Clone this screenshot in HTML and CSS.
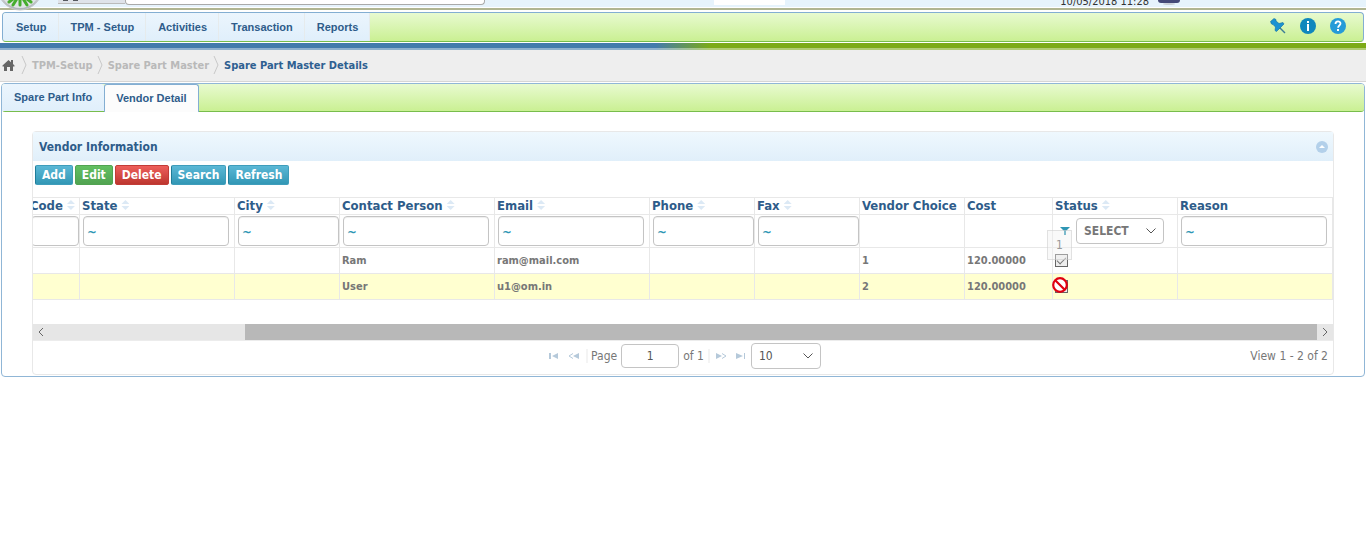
FILE: index.html
```html
<!DOCTYPE html>
<html lang="en">
<head>
    <meta charset="UTF-8">
    <meta name="viewport" content="width=device-width, initial-scale=1.0">
    <title>Spare Part Master Details</title>
    <link rel="stylesheet" href="styles.css">
</head>
<body>
    <header class="top-header">
        <svg class="logo" width="48" height="24" viewBox="0 0 48 24">
            <defs>
                <linearGradient id="logoBg" x1="0" y1="0" x2="0" y2="1">
                    <stop offset="0.5" stop-color="#e4e8ea"/>
                    <stop offset="1" stop-color="#a9b0b4"/>
                </linearGradient>
            </defs>
            <circle cx="20" cy="-12" r="22" fill="url(#logoBg)" stroke="#c4c9cc"/>
            <circle cx="20" cy="-12" r="20" fill="#dfe4e6"/>
            <g stroke="#45ad2e" stroke-width="3" stroke-linecap="round">
                <path d="M20 -3V5M18 -3L13 5M22 -3L27 5M17 -4L9 2M23 -4L31 2"/>
            </g>
        </svg>
        <div class="top-search">
            <span class="search-type">
                <svg width="20" height="3" viewBox="0 0 20 3"><path d="M2 0h5v1H2zM12 0h5v1h-5z" fill="#55585f"/></svg>
            </span>
            <input class="search-text" type="text" aria-label="Search">
        </div>
        <div class="top-box"></div>
        <div class="top-info">
            <span class="date">10/05/2018 11:28</span>
            <svg class="user-icon" width="24" height="6" viewBox="0 0 24 6">
                <ellipse cx="12" cy="4" rx="6" ry="1" fill="#c9ced6"/>
                <path d="M1 0h22c0 2-1 3-3 3H4C2 3 1 2 1 0z" fill="#454a78"/>
            </svg>
        </div>
    </header>

    <div class="menu-bar">
        <nav class="menu">
            <button type="button">Setup</button>
            <button type="button">TPM - Setup</button>
            <button type="button">Activities</button>
            <button type="button">Transaction</button>
            <button type="button">Reports</button>
        </nav>
        <div class="menu-icons">
            <button type="button" aria-label="Pin">
                <svg width="16" height="16" viewBox="0 0 16 16">
                    <path d="M9 9l6 6" stroke="#3c7d93" stroke-width="1.400"/>
                    <path d="M0.500 3.500L4 0.500 6 1.500 6 3 9 5.500 13 4.500 14 6 6.500 13.500 5 12.500 5.500 9 3 6.500 1.500 6z" fill="#1b93d2" stroke="#0f6d9f" stroke-width="0.600"/>
                </svg>
            </button>
            <button type="button" aria-label="Information">
                <svg width="16" height="16" viewBox="0 0 16 16">
                    <circle cx="8" cy="8" r="8" fill="#0f87bd"/>
                    <path d="M7 3h2v2H7zM7 6h2v7H7z" fill="#fff"/>
                </svg>
            </button>
            <button type="button" aria-label="Help">
                <svg width="16" height="16" viewBox="0 0 16 16">
                    <circle cx="8" cy="8" r="8" fill="#259bd8"/>
                    <path d="M5.500 6c0-3.300 5-3.300 5-0.500 0 2-2.400 2-2.400 4.200" fill="none" stroke="#fff" stroke-width="1.800"/>
                    <path d="M7 11h2v2H7z" fill="#fff"/>
                </svg>
            </button>
        </div>
    </div>

    <div class="color-strip"></div>

    <nav class="breadcrumb" aria-label="Breadcrumb">
        <a href="#" aria-label="Home">
            <svg class="home" width="13" height="13" viewBox="0 0 13 13"><path d="M6.500 1L9 3.200V1h2v4l1.500 1.500v1H11V12H8V8H5v4H2V7.500H0.500v-1z" fill="#666"/></svg>
        </a>
        <svg class="sep" width="6" height="18" viewBox="0 0 6 18"><path d="M1 0l4 9-4 9" fill="none" stroke="#c8c8c8"/></svg>
        <a href="#">TPM-Setup</a>
        <svg class="sep" width="6" height="18" viewBox="0 0 6 18"><path d="M1 0l4 9-4 9" fill="none" stroke="#c8c8c8"/></svg>
        <a href="#">Spare Part Master</a>
        <svg class="sep" width="6" height="18" viewBox="0 0 6 18"><path d="M1 0l4 9-4 9" fill="none" stroke="#c8c8c8"/></svg>
        <a href="#" class="current">Spare Part Master Details</a>
    </nav>

    <main class="tabs">
        <div class="tab-bar">
            <button type="button" class="tab">Spare Part Info</button>
            <button type="button" class="tab active">Vendor Detail</button>
        </div>

        <section class="grid">
            <div class="grid-title">
                <h2>Vendor Information</h2>
                <button type="button" class="collapse" aria-label="Collapse">
                    <svg width="12" height="12" viewBox="0 0 12 12"><circle cx="6" cy="6" r="6" fill="#b3d0ea"/><path d="M3 7l3-3 3 3z" fill="#fff"/></svg>
                </button>
            </div>

            <div class="grid-buttons">
                <button type="button" class="btn">Add</button>
                <button type="button" class="btn btn-green">Edit</button>
                <button type="button" class="btn btn-red">Delete</button>
                <button type="button" class="btn">Search</button>
                <button type="button" class="btn">Refresh</button>
            </div>

            <div class="grid-view">
                <table>
                    <colgroup>
                        <col class="col-code">
                        <col class="col-wide">
                        <col class="col-normal">
                        <col class="col-wide">
                        <col class="col-wide">
                        <col class="col-normal">
                        <col class="col-normal">
                        <col class="col-normal">
                        <col class="col-cost">
                        <col class="col-status">
                        <col class="col-wide">
                    </colgroup>
                    <thead>
                        <tr>
                            <th>Code<span class="sort"></span></th>
                            <th>State<span class="sort"></span></th>
                            <th>City<span class="sort"></span></th>
                            <th>Contact Person<span class="sort"></span></th>
                            <th>Email<span class="sort"></span></th>
                            <th>Phone<span class="sort"></span></th>
                            <th>Fax<span class="sort"></span></th>
                            <th>Vendor Choice</th>
                            <th>Cost</th>
                            <th>Status<span class="sort"></span></th>
                            <th>Reason</th>
                        </tr>
                        <tr class="filter">
                            <td><input type="text" class="fill" aria-label="Code"></td>
                            <td><input type="text" value="~" aria-label="State"></td>
                            <td><input type="text" class="fill" value="~" aria-label="City"></td>
                            <td><input type="text" value="~" aria-label="Contact Person"></td>
                            <td><input type="text" value="~" aria-label="Email"></td>
                            <td><input type="text" class="fill" value="~" aria-label="Phone"></td>
                            <td><input type="text" class="fill" value="~" aria-label="Fax"></td>
                            <td></td>
                            <td></td>
                            <td>
                                <div class="status-filter">
                                    <svg width="10" height="8" viewBox="0 0 10 8"><path d="M0 0h10L6 4v4H4V4z" fill="#2f96b4"/></svg>
                                    <div class="drop status-drop">
                                        <select aria-label="Status"><option>SELECT</option></select>
                                        <svg width="10" height="6" viewBox="0 0 10 6"><path d="M0.500 0.500L5 5l4.500-4.500" fill="none" stroke="#555"/></svg>
                                    </div>
                                </div>
                            </td>
                            <td><input type="text" value="~" aria-label="Reason"></td>
                        </tr>
                    </thead>
                    <tbody>
                        <tr>
                            <td></td>
                            <td></td>
                            <td></td>
                            <td>Ram</td>
                            <td>ram@mail.com</td>
                            <td></td>
                            <td></td>
                            <td>1</td>
                            <td>120.00000</td>
                            <td>
                                <div class="status">
                                    <input type="checkbox" checked disabled aria-label="Status">
                                    <span class="drag-tip">1</span>
                                </div>
                            </td>
                            <td></td>
                        </tr>
                        <tr class="selected">
                            <td></td>
                            <td></td>
                            <td></td>
                            <td>User</td>
                            <td>u1@om.in</td>
                            <td></td>
                            <td></td>
                            <td>2</td>
                            <td>120.00000</td>
                            <td>
                                <div class="status">
                                    <input type="checkbox" disabled aria-label="Status">
                                    <svg class="no-drop" width="16" height="16" viewBox="0 0 16 16"><circle cx="8" cy="8" r="6.800" fill="#fff" stroke="#e00010" stroke-width="2.200"/><path d="M3.500 3.500l9 9" stroke="#e00010" stroke-width="2.200"/></svg>
                                </div>
                            </td>
                            <td></td>
                        </tr>
                    </tbody>
                </table>
            </div>

            <div class="scrollbar">
                <svg class="scroll-prev" width="16" height="16" viewBox="0 0 16 16"><path d="M10 4L6 8l4 4" fill="none" stroke="#666"/></svg>
                <div class="thumb"></div>
                <svg class="scroll-next" width="16" height="16" viewBox="0 0 16 16"><path d="M6 4l4 4-4 4" fill="none" stroke="#666"/></svg>
            </div>

            <div class="pager">
                <div class="pager-center">
                    <button type="button" class="nav" aria-label="First page">
                        <svg width="10" height="6" viewBox="0 0 10 6"><path d="M0 0h2v6H0zM9 0v6L3 3z" fill="#b5c9da"/></svg>
                    </button>
                    <button type="button" class="nav" aria-label="Previous page">
                        <svg width="11" height="6" viewBox="0 0 11 6"><path d="M11 0v6L5 3z" fill="#b5c9da"/><path d="M5 0.500L1 3l4 2.500" fill="none" stroke="#b5c9da"/></svg>
                    </button>
                    <label class="page-label" for="page">Page</label>
                    <input type="text" id="page" class="page-input" value="1">
                    <span class="page-total">of 1</span>
                    <button type="button" class="nav" aria-label="Next page">
                        <svg width="11" height="6" viewBox="0 0 11 6"><path d="M0 0v6l6-3z" fill="#b5c9da"/><path d="M6 0.500L10 3l-4 2.500" fill="none" stroke="#b5c9da"/></svg>
                    </button>
                    <button type="button" class="nav" aria-label="Last page">
                        <svg width="10" height="6" viewBox="0 0 10 6"><path d="M8 0h1v6H8zM0 0v6l7-3z" fill="#b5c9da"/></svg>
                    </button>
                    <div class="drop page-drop">
                        <select aria-label="Rows per page"><option>10</option></select>
                        <svg width="10" height="6" viewBox="0 0 10 6"><path d="M0.500 0.500L5 5l4.500-4.500" fill="none" stroke="#555"/></svg>
                    </div>
                </div>
                <span class="pager-info">View 1 - 2 of 2</span>
            </div>
        </section>
    </main>
</body>
</html>
```
FILE: styles.css
```css
* {
    box-sizing: border-box;
}

body {
    margin: 0;
    background-color: #fff;
    color: #777;
    font-family: Tahoma, "DejaVu Sans Condensed", "DejaVu Sans", sans-serif;
    font-size: 11px;
}

button,
input,
select {
    font: inherit;
    color: inherit;
    margin: 0;
}

button {
    border: none;
    background: none;
    padding: 0;
    cursor: pointer;
}

svg {
    display: block;
    flex: none;
}

a {
    color: inherit;
    text-decoration: none;
}

/* header */
.top-header {
    position: relative;
    display: flex;
    align-items: flex-end;
    height: 10px;
    padding-left: 58px;
    background: linear-gradient(#e6f3fc 7px, #fff 7px, #fff 8px, #b0b592 8px);
}

.logo {
    position: absolute;
    left: 0;
    top: 0;
}

.top-search {
    display: flex;
    align-items: flex-start;
    height: 10px;
    width: 427px;
}

.search-type {
    width: 67px;
    height: 4px;
    padding-left: 3px;
    background-color: #dfe3ea;
    border-bottom: 1px solid #bbb;
}

.search-text {
    flex: 1;
    height: 5px;
    padding: 0;
    background-color: #fff;
    border: 1px solid #aaa;
    border-top: none;
    border-radius: 0 0 4px 4px;
}

.top-box {
    width: 71px;
    height: 5px;
    margin: 0 0 5px 229px;
    background-color: #fff;
}

.top-info {
    display: flex;
    align-items: flex-end;
    gap: 8px;
    height: 8px;
    margin: 0 185px 2px auto;
    overflow: hidden;
    color: #333;
}

.date {
    line-height: 12px;
    white-space: nowrap;
}

.user-icon {
    margin-bottom: 2px;
}

/* menu */
.menu-bar {
    display: flex;
    justify-content: space-between;
    height: 30px;
    margin: 2px 2px 1px;
    border: 1px solid #83aed2;
    border-bottom-color: #78bd4c;
    border-radius: 4px;
    background: linear-gradient(#e8fad0, #caf093);
}

.menu {
    display: flex;
}

.menu button,
.tab {
    padding: 0 12px;
    background: linear-gradient(#ebf5fd, #e0effb);
    color: #2e5c8a;
    font-family: Arial, "Liberation Sans", sans-serif;
    font-weight: bold;
}

.menu button {
    border-right: 1px solid #e6ebec;
    padding: 0 11px 0 12px;
}

.menu button:first-child {
    border-radius: 3px 0 0 3px;
    padding-left: 13px;
}

.menu-icons {
    display: flex;
    align-items: center;
    gap: 14px;
    margin-right: 17px;
    padding-bottom: 2px;
}

.color-strip {
    height: 7px;
    background: linear-gradient(rgba(255, 255, 255, 0) 5px, rgba(255, 255, 255, 0.4) 5px), linear-gradient(90deg, #437bac 48%, #7caa17 52%);
}

/* breadcrumb */
.breadcrumb {
    display: flex;
    align-items: center;
    height: 32px;
    padding: 0 2px 1px;
    background-color: #eee;
    border-bottom: 1px solid #d5d5d5;
    color: #b9b9b9;
    font-weight: bold;
}

.home {
    margin-right: 6px;
}

.sep {
    margin: 0 5px 0 4px;
}

.breadcrumb a:first-child + .sep {
    margin-left: 0;
}

.breadcrumb .current {
    color: #2e6091;
}

/* tabs */
.tabs {
    margin: 1px;
    border: 1px solid #90b6d6;
    border-radius: 4px;
}

.tab-bar {
    display: flex;
    height: 28px;
    border-bottom: 1px solid #78bd4c;
    border-radius: 3px;
    background: linear-gradient(#e8fad0, #caf093);
}

.tab {
    padding: 0 12px 1px;
    border-radius: 3px 3px 0 0;
}

.tab.active {
    padding: 0 11px 2px;
    height: 28px;
    border: 1px solid #83aed2;
    border-bottom: none;
    background: #fcfcfc;
}

/* grid */
.grid {
    margin: 19px 30px 1px;
    border: 1px solid #e8e8e8;
    border-radius: 4px;
}

.grid-title {
    display: flex;
    align-items: center;
    justify-content: space-between;
    height: 29px;
    padding: 0 5px 0 6px;
    background: linear-gradient(#eff8fe, #e0effa);
}

.grid-title h2 {
    margin: 0;
    color: #2e5c8a;
    font-size: 12px;
}

.grid-buttons {
    display: flex;
    gap: 2px;
    height: 36px;
    padding: 4px 2px 12px;
}

.btn {
    padding: 0 6px;
    border: 1px solid #3f9dbb;
    border-left-color: #1f7d9a;
    border-radius: 2px;
    background: linear-gradient(#5bb8d6, #3297b5);
    color: #fff;
    font-size: 12px;
    font-weight: bold;
}

.btn-green {
    border-color: #51a351;
    background: linear-gradient(#62c062, #51a351);
}

.btn-red {
    border-color: #c23c37;
    background: linear-gradient(#ee5f5b, #bd362f);
}

/* the table is scrolled to its right end */
.grid-view {
    display: flex;
    justify-content: flex-end;
    overflow: hidden;
    padding-bottom: 24px;
}

table {
    flex: none;
    width: 1305px;
    table-layout: fixed;
    border-spacing: 0;
    border-top: 1px solid #e8e8e8;
    font-weight: bold;
}

.col-code {
    width: 52px;
}

.col-wide {
    width: 155px;
}

.col-normal {
    width: 105px;
}

.col-cost {
    width: 88px;
}

.col-status {
    width: 125px;
}

th,
td {
    padding: 0 2px;
    border-right: 1px solid #e8e8e8;
    border-bottom: 1px solid #e8e8e8;
    text-align: left;
    white-space: nowrap;
}

th {
    height: 17px;
    color: #2e5c8a;
    font-size: 13px;
    line-height: 16px;
}

td {
    height: 26px;
}

.sort {
    display: inline-block;
    width: 8px;
    height: 10px;
    margin-left: 4px;
    background-color: #dce9f5;
    clip-path: polygon(50% 0, 100% 40%, 0 40%, 0 60%, 100% 60%, 50% 100%, 0 60%, 0 40%);
}

.filter td {
    height: 33px;
    padding: 0 5px 0 3px;
}

.filter input {
    display: block;
    width: 100%;
    height: 30px;
    padding: 0 3px;
    border: 1px solid #c4c4c4;
    border-radius: 4px;
    box-shadow: inset 0 1px 1px #eee;
    color: #2f96b4;
    font-size: 13px;
    font-weight: bold;
}

.filter input.fill {
    width: calc(100% + 5px);
}

.status-filter {
    display: flex;
    align-items: center;
    gap: 6px;
    padding-left: 4px;
}

.drop {
    display: flex;
    align-items: center;
    position: relative;
}

.drop select {
    width: 100%;
    height: 26px;
    padding: 0 7px;
    border: 1px solid #c4c4c4;
    border-radius: 4px;
    background-color: #fff;
    appearance: none;
    font-size: 12px;
}

.drop svg {
    position: absolute;
    right: 8px;
    pointer-events: none;
}

.status-drop {
    width: 88px;
}

.status {
    position: relative;
    display: flex;
    align-items: center;
}

.status input {
    appearance: none;
    width: 13px;
    height: 13px;
    border: 1px solid #666;
    background-color: #eee;
}

.status input:checked::after {
    content: "";
    display: block;
    width: 8px;
    height: 4px;
    margin: 2px 1px;
    border-left: 1px solid #777;
    border-bottom: 1px solid #777;
    transform: rotate(-45deg);
}

.drag-tip {
    position: absolute;
    left: -8px;
    top: -24px;
    width: 25px;
    height: 30px;
    padding: 7px 8px;
    border: 1px solid rgba(190, 190, 190, 0.4);
    background-color: rgba(240, 240, 240, 0.4);
    color: #999;
    font-size: 12px;
    font-weight: normal;
    line-height: 14px;
}

.no-drop {
    position: absolute;
    left: -3px;
    top: -3px;
}

.selected {
    background-color: #ffffd0;
}

/* scrollbar */
.scrollbar {
    display: flex;
    justify-content: space-between;
    height: 17px;
    background-color: #e6e6e6;
    border-bottom: 1px solid #ececec;
}

.thumb {
    flex: 1;
    margin-left: 196px;
    background-color: #b8b8b8;
}

/* pager */
.pager {
    position: relative;
    display: flex;
    justify-content: center;
    align-items: center;
    height: 33px;
    padding: 0 0 4px 4px;
    font-size: 12px;
}

.pager-center {
    display: flex;
    align-items: center;
    gap: 9px;
}

.page-label {
    padding-left: 3px;
    margin-left: -2px;
    border-left: 2px solid #f4f4f4;
}

.page-input {
    width: 58px;
    height: 24px;
    margin: 0 -5px;
    border: 1px solid #c4c4c4;
    border-radius: 4px;
    text-align: center;
    color: #555;
}

.page-total {
    margin-right: -3px;
    padding-right: 4px;
    border-right: 2px solid #f4f4f4;
}

.page-drop {
    width: 70px;
    margin-left: -4px;
    color: #555;
}

.pager-info {
    position: absolute;
    right: 5px;
}
```
